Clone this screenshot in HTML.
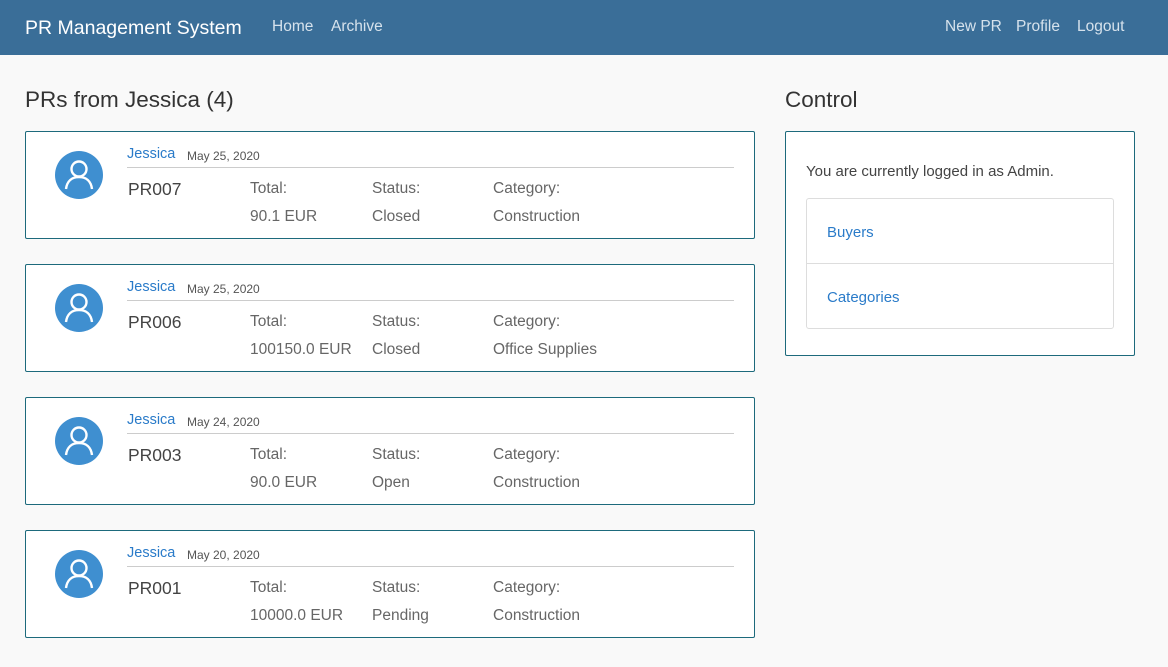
<!DOCTYPE html>
<html><head><style>
*{margin:0;padding:0;box-sizing:border-box}
body{width:1168px;height:667px;background:#f9f9f9;font-family:"Liberation Sans",sans-serif;color:#444;position:relative;overflow:hidden}
.a{position:absolute;white-space:nowrap}
.nav{position:absolute;left:0;top:0;width:1168px;height:55px;background:#3a6e98}
.nl{color:#d6e2ec;font-size:15.5px;top:18px}
.card{position:absolute;left:25px;width:730px;height:108px;border:1px solid #1d6a7c;background:#fff;border-radius:2px}
.av{position:absolute;left:29px;top:19px;width:48px;height:48px}
.nm{left:101px;top:14px;font-size:14.5px;color:#2a7bc9}
.dt{left:161px;top:17px;font-size:12px;color:#555}
.ln{position:absolute;left:101px;top:35px;width:607px;height:1px;background:#ccc}
.pr{left:102px;top:47px;font-size:17.5px;color:#444}
.l{font-size:15.5px;color:#666}
</style></head><body>
<div class="nav"></div>
<div class="a" style="left:25px;top:17px;font-size:19.5px;color:#fff">PR Management System</div>
<div class="a nl" style="left:272px">Home</div>
<div class="a nl" style="left:331px">Archive</div>
<div class="a nl" style="left:945px">New PR</div>
<div class="a nl" style="left:1016px">Profile</div>
<div class="a nl" style="left:1077px">Logout</div>
<div class="a" style="left:25px;top:87px;font-size:22.5px;color:#333">PRs from Jessica (4)</div>
<div class="a" style="left:785px;top:87px;font-size:22.5px;color:#333">Control</div>

<div class="card" style="top:131px"><svg class="av" viewBox="0 0 48 48"><circle cx="24" cy="24" r="24" fill="#3f8fd0"/><circle cx="24" cy="18" r="7.5" fill="none" stroke="#fff" stroke-width="2.4"/><path d="M11 38c1-8 6-12 13-12s12 4 13 12" fill="none" stroke="#fff" stroke-width="2.4"/></svg>
<div class="a nm">Jessica</div><div class="a dt">May 25, 2020</div><div class="ln"></div><div class="a pr">PR007</div>
<div class="a l" style="left:224px;top:48px">Total:</div><div class="a l" style="left:224px;top:76px">90.1 EUR</div>
<div class="a l" style="left:346px;top:48px">Status:</div><div class="a l" style="left:346px;top:76px">Closed</div>
<div class="a l" style="left:467px;top:48px">Category:</div><div class="a l" style="left:467px;top:76px">Construction</div></div>

<div class="card" style="top:264px"><svg class="av" viewBox="0 0 48 48"><circle cx="24" cy="24" r="24" fill="#3f8fd0"/><circle cx="24" cy="18" r="7.5" fill="none" stroke="#fff" stroke-width="2.4"/><path d="M11 38c1-8 6-12 13-12s12 4 13 12" fill="none" stroke="#fff" stroke-width="2.4"/></svg>
<div class="a nm">Jessica</div><div class="a dt">May 25, 2020</div><div class="ln"></div><div class="a pr">PR006</div>
<div class="a l" style="left:224px;top:48px">Total:</div><div class="a l" style="left:224px;top:76px">100150.0 EUR</div>
<div class="a l" style="left:346px;top:48px">Status:</div><div class="a l" style="left:346px;top:76px">Closed</div>
<div class="a l" style="left:467px;top:48px">Category:</div><div class="a l" style="left:467px;top:76px">Office Supplies</div></div>

<div class="card" style="top:397px"><svg class="av" viewBox="0 0 48 48"><circle cx="24" cy="24" r="24" fill="#3f8fd0"/><circle cx="24" cy="18" r="7.5" fill="none" stroke="#fff" stroke-width="2.4"/><path d="M11 38c1-8 6-12 13-12s12 4 13 12" fill="none" stroke="#fff" stroke-width="2.4"/></svg>
<div class="a nm">Jessica</div><div class="a dt">May 24, 2020</div><div class="ln"></div><div class="a pr">PR003</div>
<div class="a l" style="left:224px;top:48px">Total:</div><div class="a l" style="left:224px;top:76px">90.0 EUR</div>
<div class="a l" style="left:346px;top:48px">Status:</div><div class="a l" style="left:346px;top:76px">Open</div>
<div class="a l" style="left:467px;top:48px">Category:</div><div class="a l" style="left:467px;top:76px">Construction</div></div>

<div class="card" style="top:530px"><svg class="av" viewBox="0 0 48 48"><circle cx="24" cy="24" r="24" fill="#3f8fd0"/><circle cx="24" cy="18" r="7.5" fill="none" stroke="#fff" stroke-width="2.4"/><path d="M11 38c1-8 6-12 13-12s12 4 13 12" fill="none" stroke="#fff" stroke-width="2.4"/></svg>
<div class="a nm">Jessica</div><div class="a dt">May 20, 2020</div><div class="ln"></div><div class="a pr">PR001</div>
<div class="a l" style="left:224px;top:48px">Total:</div><div class="a l" style="left:224px;top:76px">10000.0 EUR</div>
<div class="a l" style="left:346px;top:48px">Status:</div><div class="a l" style="left:346px;top:76px">Pending</div>
<div class="a l" style="left:467px;top:48px">Category:</div><div class="a l" style="left:467px;top:76px">Construction</div></div>

<div style="position:absolute;left:785px;top:131px;width:350px;height:225px;border:1px solid #1d6a7c;background:#fff;border-radius:2px">
<div class="a" style="left:20px;top:31px;font-size:15px;color:#444">You are currently logged in as Admin.</div>
<div style="position:absolute;left:20px;top:66px;width:308px;height:131px;border:1px solid #ddd;border-radius:3px">
<div class="a" style="left:20px;top:25px;font-size:15px;color:#2a7bc9">Buyers</div>
<div style="position:absolute;left:0;top:64px;width:306px;height:1px;background:#ddd"></div>
<div class="a" style="left:20px;top:90px;font-size:15px;color:#2a7bc9">Categories</div>
</div></div>
</body></html>
